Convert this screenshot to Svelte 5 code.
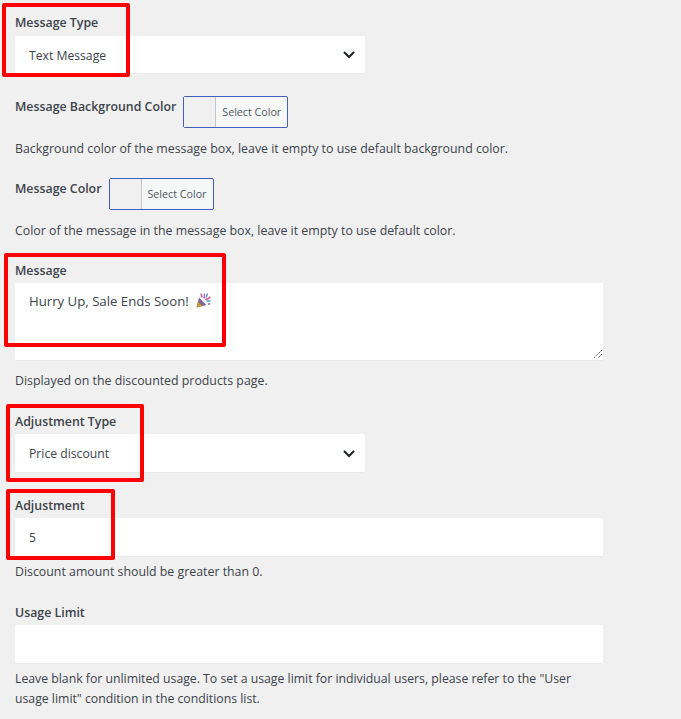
<script>
  const chevron = 'M5 8l5 5 5-5';
</script>

<div class="form">
  <div class="field first">
    <label for="msg-type">Message Type</label>
    <div class="select" id="msg-type">
      <span>Text Message</span>
      <svg width="20" height="20" viewBox="0 0 20 20" aria-hidden="true"><path d={chevron} /></svg>
    </div>
    <i class="mark mark-type"></i>
  </div>

  <div class="field color-field">
    <div class="color-row">
      <span class="label">Message Background Color</span>
      <button class="color-btn"><span class="swatch"></span><span class="btn-text">Select Color</span></button>
    </div>
    <p class="help color-help">Background color of the message box, leave it empty to use default background color.</p>
  </div>

  <div class="field color-field next">
    <div class="color-row">
      <span class="label">Message Color</span>
      <button class="color-btn"><span class="swatch"></span><span class="btn-text">Select Color</span></button>
    </div>
    <p class="help color-help">Color of the message in the message box, leave it empty to use default color.</p>
  </div>

  <div class="field message">
    <label for="msg">Message</label>
    <div class="textarea" id="msg">
      <span>Hurry Up, Sale Ends Soon!</span>
      <svg class="party" width="15" height="15" viewBox="0 0 15 15" aria-hidden="true">
        <path d="M0.5 14.5L3 4.5l7.5 7.5z" fill="#7d6a96" />
        <path d="M0.5 14.5l1.5-6 4.5 4.5z" fill="#c8963e" />
        <path d="M5 0.5l1 4M8.5 0.5L8 5.5" stroke="#c565a5" stroke-width="1.5" fill="none" />
        <path d="M14.5 4L9.5 7" stroke="#e0609a" stroke-width="1.5" fill="none" />
        <path d="M11.5 0.5L10 4.5M14.5 8H10.5" stroke="#4b9ad8" stroke-width="1.5" fill="none" />
        <circle cx="13" cy="11" r="1.1" fill="#8a6bc0" />
      </svg>
      <svg class="grip" width="10" height="10" viewBox="0 0 10 10" aria-hidden="true"><path d="M9 1L1 9M9 5L5 9" /></svg>
    </div>
    <p class="help after-area">Displayed on the discounted products page.</p>
    <i class="mark mark-message"></i>
  </div>

  <div class="field adj-type">
    <label for="adj-type">Adjustment Type</label>
    <div class="select tall" id="adj-type">
      <span>Price discount</span>
      <svg width="20" height="20" viewBox="0 0 20 20" aria-hidden="true"><path d={chevron} /></svg>
    </div>
    <i class="mark mark-adj-type"></i>
  </div>

  <div class="field adj">
    <label for="adj">Adjustment</label>
    <div class="input" id="adj"><span>5</span></div>
    <p class="help">Discount amount should be greater than 0.</p>
    <i class="mark mark-adj"></i>
  </div>

  <div class="field usage">
    <label for="usage">Usage Limit</label>
    <div class="input" id="usage"></div>
    <p class="help">Leave blank for unlimited usage. To set a usage limit for individual users, please refer to the "User usage limit" condition in the conditions list.</p>
  </div>
</div>

<style>
  :global(body) {
    background: #f0f0f1;
  }
  .form {
    width: 681px;
    height: 719px;
    overflow: hidden;
    padding: 0 15px;
    box-sizing: border-box;
    font-family: "Open Sans", "Noto Sans", sans-serif;
    font-size: 12.2px;
    color: #3c434a;
  }
  .field {
    position: relative;
    width: 588px;
  }
  .first { padding-top: 14px; }
  .color-field { padding-top: 22px; }
  .color-field.next { padding-top: 19px; }
  .message { padding-top: 21px; }
  .adj-type { padding-top: 22px; }
  .adj { padding-top: 24px; }
  .usage { padding-top: 22px; }

  label, .label {
    display: block;
    font-size: 12.35px;
    font-weight: 600;
    line-height: 17px;
    margin-bottom: 5px;
    color: #3c434a;
  }
  .message label, .adj-type label, .adj label, .usage label {
    margin-bottom: 4px;
  }
  .select, .input {
    display: flex;
    align-items: center;
    justify-content: space-between;
    box-sizing: border-box;
    height: 38px;
    width: 350px;
    padding: 1px 6px 0 14px;
    background: #fff;
    border-bottom: 1px solid #e9e9e9;
    border-radius: 2px;
  }
  .select.tall { height: 39px; }
  .input {
    width: 588px;
    height: 39px;
  }
  .select svg {
    margin-top: -2px;
  }
  .select svg path {
    fill: none;
    stroke: #1d2327;
    stroke-width: 2;
  }
  .color-row {
    display: flex;
    gap: 7px;
    align-items: flex-start;
  }
  .color-row .label {
    margin: 2px 0 0;
  }
  .color-btn {
    display: flex;
    align-items: stretch;
    box-sizing: border-box;
    width: 105px;
    height: 32px;
    padding: 0;
    background: #f6f7f7;
    border: 1px solid #3f60bf;
    border-radius: 2px;
    font: inherit;
    font-size: 10.7px;
    color: #50575e;
  }
  .swatch {
    width: 31px;
    background: #f0f0f1;
    border-right: 1px solid #c3c4c7;
  }
  .btn-text {
    align-self: center;
    padding-left: 6px;
  }
  .textarea {
    position: relative;
    box-sizing: border-box;
    height: 78px;
    padding: 8px 14px;
    background: #fff;
    border-bottom: 1px solid #e9e9e9;
    font-size: 13.2px;
    line-height: 20px;
    display: flex;
    align-items: flex-start;
    gap: 7px;
  }
  .party { margin-top: 2px; }
  .grip {
    position: absolute;
    right: 0;
    bottom: 1px;
  }
  .grip path {
    stroke: #50575e;
    stroke-width: 1;
    stroke-dasharray: 1.5 1;
    fill: none;
  }
  .help {
    margin: 5px 0 0;
    font-size: 12.35px;
    line-height: 20px;
    color: #3c434a;
    width: 580px;
  }
  .usage .help { font-size: 12.25px; }
  .color-help { margin-top: 11px; }
  .after-area { margin-top: 10px; }
  .mark {
    position: absolute;
    box-sizing: border-box;
    border: 4px solid #f00;
    border-radius: 2px;
    pointer-events: none;
  }
  .mark-type { left: -13px; top: 3px; width: 128px; height: 74px; }
  .mark-message { left: -11px; top: 12px; width: 222px; height: 94px; }
  .mark-adj-type { left: -9px; top: 13px; width: 138px; height: 78px; }
  .mark-adj { left: -9px; top: 16px; width: 109px; height: 71px; }
</style>
